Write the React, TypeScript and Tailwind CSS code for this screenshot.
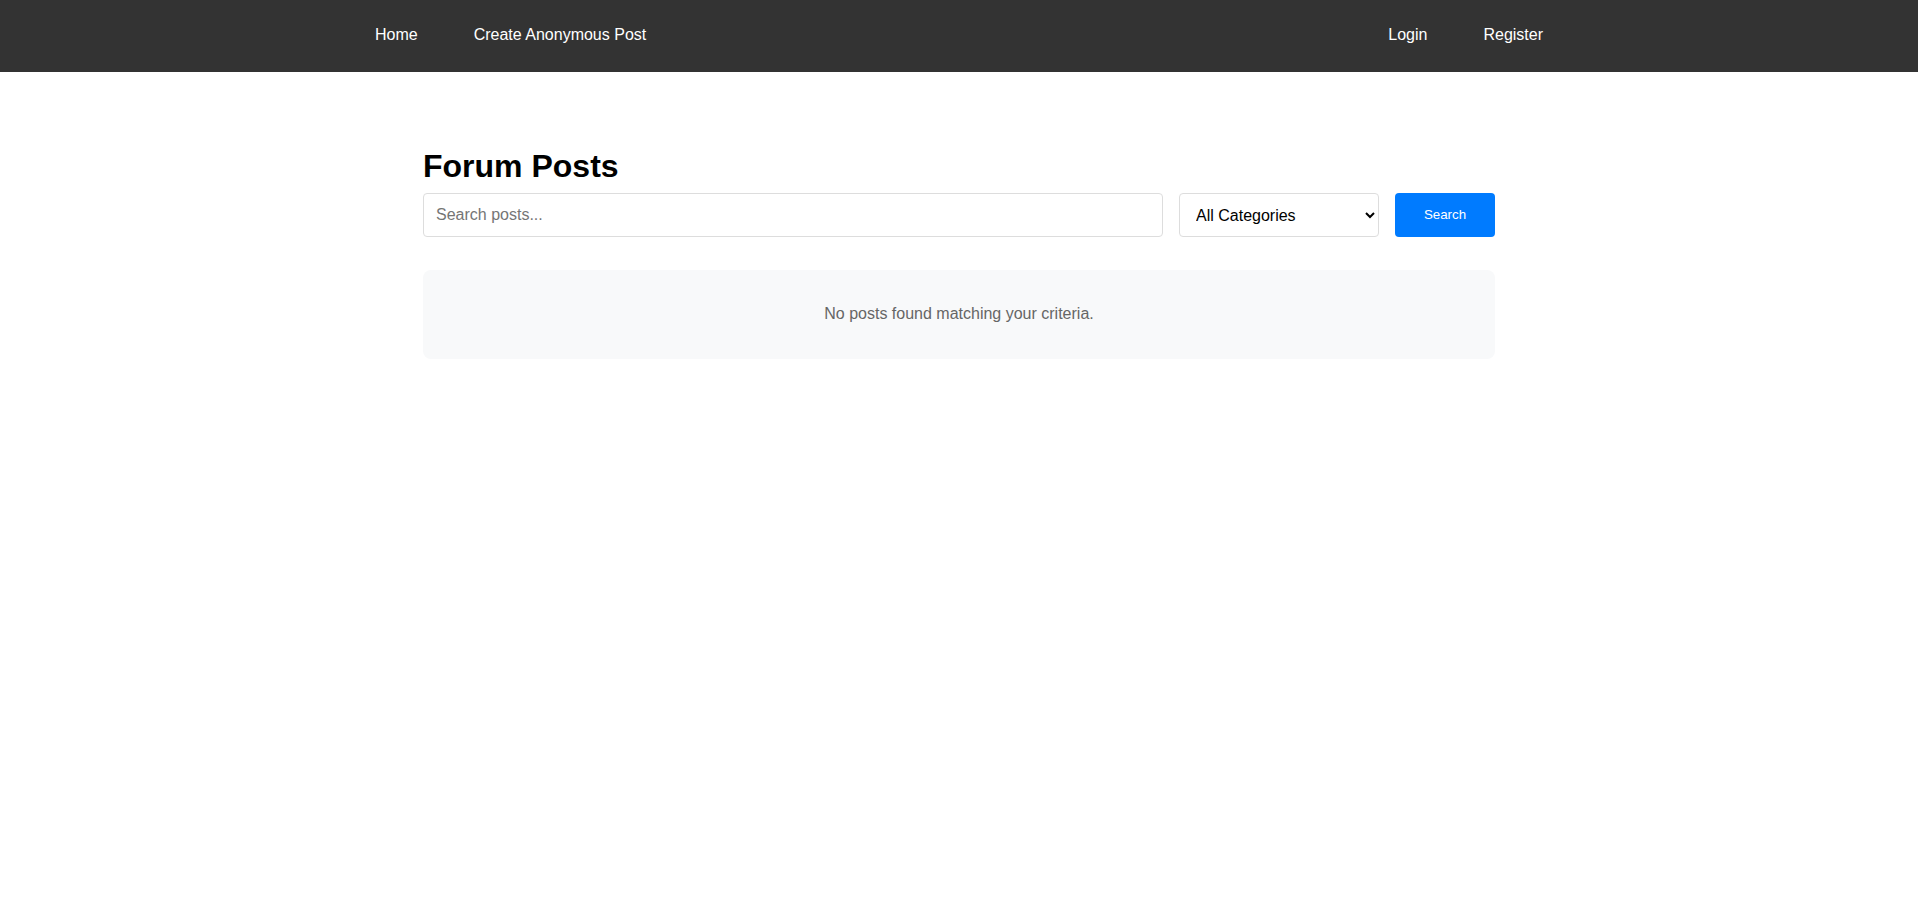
import React from "react";

export default function App() {
  return (
    <div className="min-h-screen bg-white font-['Liberation_Sans',Arial,sans-serif] text-black">
      <nav className="bg-[#333333] h-[72px] pb-[2px] flex items-center">
        <div className="w-full max-w-[1200px] mx-auto flex justify-between items-center">
          <div className="flex gap-6">
            <a href="#" className="px-4 py-2 text-white text-[16px] leading-6">Home</a>
            <a href="#" className="px-4 py-2 text-white text-[16px] leading-6">Create Anonymous Post</a>
          </div>
          <div className="flex gap-6">
            <a href="#" className="px-4 py-2 text-white text-[16px] leading-6">Login</a>
            <a href="#" className="px-4 py-2 text-white text-[16px] leading-6">Register</a>
          </div>
        </div>
      </nav>
      <main className="max-w-[1102px] mx-auto px-[15px] pt-[76px]">
        <h1 className="text-[32px] leading-[37px] font-bold mb-2">Forum Posts</h1>
        <form className="flex gap-4" onSubmit={(e) => e.preventDefault()}>
          <input
            type="text"
            placeholder="Search posts..."
            className="flex-1 min-w-0 h-[44px] px-3 border border-[#dddddd] rounded-[4px] text-[16px] placeholder:text-[#757575] outline-none"
          />
          <select className="w-[200px] h-[44px] px-3 border border-[#dddddd] rounded-[4px] text-[16px] bg-white text-black outline-none">
            <option>All Categories</option>
          </select>
          <button
            type="submit"
            className="w-[100px] h-[44px] bg-[#007bff] text-white rounded-[4px] text-[13.33px]"
          >
            Search
          </button>
        </form>
        <div className="mt-[33px] bg-[#f8f9fa] rounded-[8px] pt-[31px] pb-[33px] text-center text-[#666666] text-[16px] leading-[25px]">
          No posts found matching your criteria.
        </div>
      </main>
    </div>
  );
}
